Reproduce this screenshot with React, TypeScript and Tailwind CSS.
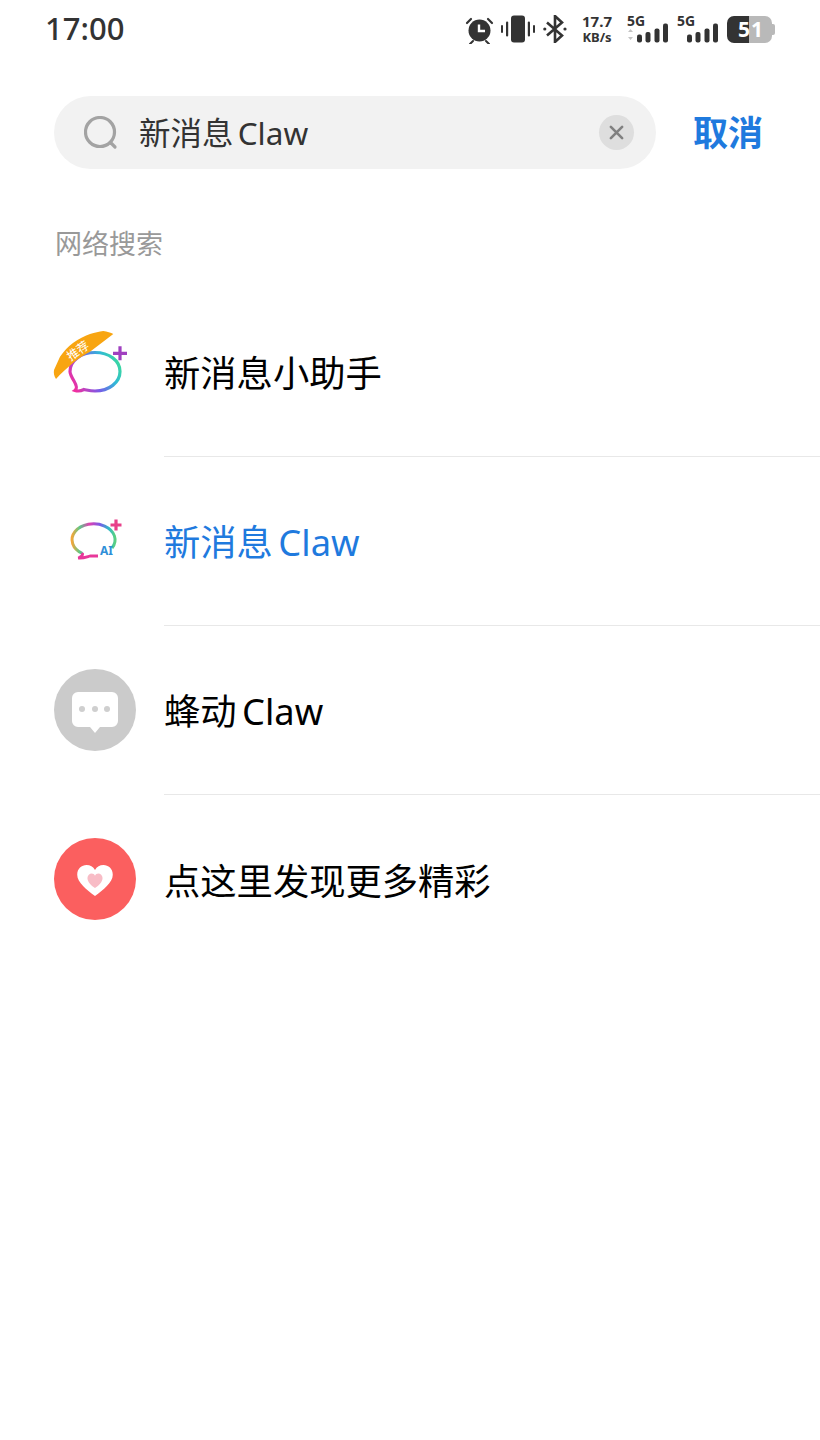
import React from "react";

const FONT = "font-['Noto_Sans','Noto_Sans_CJK_SC',sans-serif]";

function AlarmIcon() {
  return (
    <svg width="29" height="29" viewBox="0 0 29 29" fill="#333">
      <circle cx="14.5" cy="15.5" r="11" />
      <path d="M8 26l-3 3M21 26l3 3" stroke="#333" strokeWidth="2" strokeLinecap="round" />
      <path d="M2 8l4-4M27 8l-4-4" stroke="#333" strokeWidth="2.2" strokeLinecap="round" />
      <path d="M14 9.5v6.5h6" stroke="#fff" strokeWidth="2.4" fill="none" />
    </svg>
  );
}

function VibrateIcon() {
  return (
    <svg width="34" height="28" viewBox="0 0 34 28" fill="#333">
      <rect x="10" y="0.5" width="14" height="27" rx="3" />
      <rect x="0" y="10" width="2" height="8" rx="1" />
      <rect x="5" y="6.5" width="2.2" height="15" rx="1.1" />
      <rect x="26.8" y="6.5" width="2.2" height="15" rx="1.1" />
      <rect x="32" y="10" width="2" height="8" rx="1" />
    </svg>
  );
}

function BluetoothIcon() {
  return (
    <svg width="24" height="28" viewBox="0 0 24 28" fill="none">
      <path d="M4 7.5l15 13-7 6.5V1l7 6.5-15 13" stroke="#333" strokeWidth="2.6" />
      <circle cx="1.8" cy="14" r="1.6" fill="#333" />
      <circle cx="22" cy="14" r="1.6" fill="#333" />
    </svg>
  );
}

function SignalBars({ arrows }: { arrows?: boolean }) {
  return (
    <svg width="41" height="20" viewBox="0 0 41 20" fill="#333">
      {arrows && <path d="M1 9l2.5-3L6 9zM1 14l2.5 3L6 14z" fill="#c4c4c4" />}
      <rect x="10" y="11.500" width="5" height="8" rx="2" />
      <rect x="18.500" y="9" width="5" height="10.500" rx="2" />
      <rect x="27.500" y="5.500" width="5" height="14" rx="2" />
      <rect x="36" y="0.500" width="5" height="19" rx="2" />
    </svg>
  );
}

function NetworkSignal({ arrows }: { arrows?: boolean }) {
  return (
    <div className="relative w-[41px] h-[27px]">
      <span className="absolute left-0 top-[-3px] text-[14px] leading-[16px] font-bold text-[#333]">5G</span>
      <div className="absolute left-0 bottom-0">
        <SignalBars arrows={arrows} />
      </div>
    </div>
  );
}

function Battery() {
  return (
    <div className="relative flex w-[48px] h-[27px]">
      <div className="w-[22px] bg-[#333] rounded-l-[7px]" />
      <div className="w-[23px] bg-[#b9b9b9] rounded-r-[7px]" />
      <div className="w-[3px] h-[11px] self-center bg-[#b9b9b9] rounded-r-[2px]" />
      <span className="absolute left-[11px] top-0 text-[21px] leading-[27px] font-bold text-white tracking-[1px]">51</span>
    </div>
  );
}

function StatusBar() {
  return (
    <div className="flex items-center justify-between h-[58px] pl-[45px] pr-[45px]">
      <span className="-mt-[2px] text-[31px] leading-[40px] font-medium text-[#333]">17:00</span>
      <div className="flex items-center">
        <AlarmIcon />
        <div className="ml-[7px]"><VibrateIcon /></div>
        <div className="ml-[8px]"><BluetoothIcon /></div>
        <div className="ml-[13px] w-[34px] flex flex-col items-center gap-[2px] text-[#333] font-bold">
          <span className="text-[15px] leading-[15px]">17.7</span>
          <span className="text-[13px] leading-[13px]">KB/s</span>
        </div>
        <div className="ml-[13px]"><NetworkSignal arrows /></div>
        <div className="ml-[9px]"><NetworkSignal /></div>
        <div className="ml-[9px]"><Battery /></div>
      </div>
    </div>
  );
}

function SearchBar() {
  return (
    <div className="flex items-center mt-[38px] pl-[54px]">
      <div className="flex items-center w-[602px] h-[73px] rounded-full bg-[#f2f2f2] pl-[30px] pr-[22px]">
        <svg width="34" height="34" viewBox="0 0 34 34" fill="none" stroke="#a3a3a3" strokeWidth="3.2" strokeLinecap="round" className="shrink-0">
          <circle cx="16" cy="16" r="14.500" />
          <path d="M27 27l4 4" />
        </svg>
        <span className="ml-[21px] flex-1 text-[31.500px] leading-[40px] text-[#333] [word-spacing:-4px]">新消息 Claw</span>
        <div className="flex items-center justify-center w-[35px] h-[35px] rounded-full bg-[#dedede]">
          <svg width="15" height="15" viewBox="0 0 16 16" stroke="#808080" strokeWidth="2.8" strokeLinecap="round">
            <path d="M2 2l12 12M14 2L2 14" />
          </svg>
        </div>
      </div>
      <span className="ml-[37px] text-[35px] leading-[44px] font-semibold text-[#1f7ade]">取消</span>
    </div>
  );
}

function RecommendIcon() {
  return (
    <svg width="82" height="84" viewBox="0 0 82 84" fill="none" className="overflow-visible">
      <defs>
        <linearGradient id="rec-ring" x1="0" y1="0.7" x2="1" y2="0.3">
          <stop offset="0" stopColor="#f02fa0" />
          <stop offset="0.4" stopColor="#7a5ae8" />
          <stop offset="0.75" stopColor="#30b8d8" />
          <stop offset="1" stopColor="#3ad8a0" />
        </linearGradient>
      </defs>
      <path
        d="M20 50C17 45 16 43 16 40.500C16 29.500 27 21.500 41 21.500C55 21.500 66 29.500 66 40.500C66 51.500 55 60 41 60C36 60 33 59 30 58.500C27 60 24 60.500 21 59.500C23 58 23 55 20 50z"
        stroke="url(#rec-ring)"
        strokeWidth="3.200"
      />
      <path d="M59 22.300h14M66 15.300v14" stroke="#a040c0" strokeWidth="3.200" />
      <path d="M2 48C0 45 -.5 42 0 39L6 25.700C10 20 14 15.500 19.300 11.700C25 8 30 5 36 3C41 1.500 45 .5 49.300 0C53 .5 57 1.500 59.300 3L36 20.700C30 24 24 27.500 19.300 31.700C13 37 7 42 2 48z" fill="#f8a511" />
      <text x="24" y="24" fontSize="12" fill="#fff" textAnchor="middle" transform="rotate(-35 24 20)">推荐</text>
    </svg>
  );
}

function ClawIcon() {
  return (
    <div className="w-[82px] flex justify-center">
      <svg width="60" height="50" viewBox="0 0 60 50" fill="none">
        <defs>
          <linearGradient id="claw-ring" x1="0" y1="0" x2="1" y2="0">
            <stop offset="0" stopColor="#f2a63a" />
            <stop offset="0.18" stopColor="#5cc88a" />
            <stop offset="0.4" stopColor="#e040b0" />
            <stop offset="0.65" stopColor="#7a5ae8" />
            <stop offset="0.85" stopColor="#2fb8c8" />
            <stop offset="1" stopColor="#5ad080" />
          </linearGradient>
        </defs>
        <path d="M17.500 36.500A21.500 16 0 1 1 47 31" stroke="url(#claw-ring)" strokeWidth="3" />
        <path d="M17.500 36C18 38 16 40 13.300 41C18 41.500 22 39.800 25 39L33 39" stroke="#e8389a" strokeWidth="2.800" />
        <path d="M45.500 8h11M51 2.500v11" stroke="#e8408a" strokeWidth="3.200" />
        <text x="35" y="38" fontSize="12" fontWeight="700" fill="#2f8fd8">AI</text>
      </svg>
    </div>
  );
}

function BeeIcon() {
  return (
    <div className="-mt-[1px] flex items-center justify-center w-[82px] h-[82px] rounded-full bg-[#cbcbcb]">
      <svg width="46" height="41" viewBox="0 0 46 41" fill="#fff" className="mt-[5px]">
        <path d="M6 0h34a6 6 0 0 1 6 6v23a6 6 0 0 1-6 6h-12l-5 6l-5-6h-12a6 6 0 0 1-6-6V6a6 6 0 0 1 6-6z" />
        <circle cx="10" cy="17" r="3" fill="#cfcfcf" />
        <circle cx="23" cy="17" r="3" fill="#cfcfcf" />
        <circle cx="35" cy="17" r="3" fill="#cfcfcf" />
      </svg>
    </div>
  );
}

function HeartIcon() {
  return (
    <div className="-mt-[1px] flex items-center justify-center w-[82px] h-[82px] rounded-full bg-[#fb5f5f]">
      <svg width="38" height="32" viewBox="0 0 42 36" className="mt-[3px]">
        <path d="M21 35C12 28 1 20 1 11C1 4 6 0 11.500 0C15.500 0 19 2 21 5.500C23 2 26.500 0 30.500 0C36 0 41 4 41 11C41 20 30 28 21 35z" fill="#fff" />
        <path d="M21 26C16.500 22.500 12.500 19 12.500 14.500C12.500 11.500 15 9.500 17.300 9.500C19 9.500 20.300 10.500 21 12C21.700 10.500 23 9.500 24.700 9.500C27 9.500 29.500 11.500 29.500 14.500C29.500 19 25.500 22.500 21 26z" fill="#f8bcc6" />
      </svg>
    </div>
  );
}

interface RowProps {
  icon: React.ReactNode;
  label: string;
  active?: boolean;
  divider?: boolean;
}

function ResultRow({ icon, label, active, divider }: RowProps) {
  return (
    <div className="flex items-center h-[169px] pl-[54px]">
      <div className="w-[82px] shrink-0 flex justify-start">{icon}</div>
      <div
        className={`flex items-center self-stretch flex-1 ml-[28px] text-[36.300px] [word-spacing:-4px] ${
          divider ? "border-b border-[#e8e8e8]" : ""
        } ${active ? "text-[#1f7ade]" : "text-black"}`}
      >
        <span className="mt-[2px] leading-[46px]">{label}</span>
      </div>
    </div>
  );
}

export default function App() {
  return (
    <div className={`w-[820px] h-[1440px] bg-white overflow-hidden ${FONT}`}>
      <StatusBar />
      <SearchBar />
      <div className="mt-[57px] pl-[55px] text-[27px] leading-[36px] text-[#999]">网络搜索</div>
      <div className="mt-[26px]">
        <ResultRow icon={<RecommendIcon />} label="新消息小助手" divider />
        <ResultRow icon={<ClawIcon />} label="新消息 Claw" active divider />
        <ResultRow icon={<BeeIcon />} label="蜂动 Claw" divider />
        <ResultRow icon={<HeartIcon />} label="点这里发现更多精彩" />
      </div>
    </div>
  );
}
